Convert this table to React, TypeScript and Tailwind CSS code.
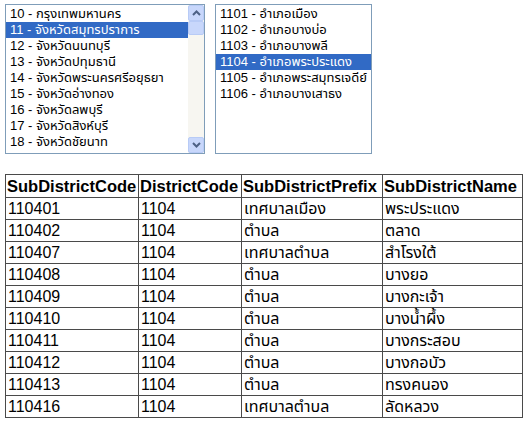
import React from 'react';

const provinces = [
  '10 - กรุงเทพมหานคร',
  '11 - จังหวัดสมุทรปราการ',
  '12 - จังหวัดนนทบุรี',
  '13 - จังหวัดปทุมธานี',
  '14 - จังหวัดพระนครศรีอยุธยา',
  '15 - จังหวัดอ่างทอง',
  '16 - จังหวัดลพบุรี',
  '17 - จังหวัดสิงห์บุรี',
  '18 - จังหวัดชัยนาท',
];

const districts = [
  '1101 - อำเภอเมือง',
  '1102 - อำเภอบางบ่อ',
  '1103 - อำเภอบางพลี',
  '1104 - อำเภอพระประแดง',
  '1105 - อำเภอพระสมุทรเจดีย์',
  '1106 - อำเภอบางเสาธง',
];

const rows: [string, string, string, string][] = [
  ['110401', '1104', 'เทศบาลเมือง', 'พระประแดง'],
  ['110402', '1104', 'ตำบล', 'ตลาด'],
  ['110407', '1104', 'เทศบาลตำบล', 'สำโรงใต้'],
  ['110408', '1104', 'ตำบล', 'บางยอ'],
  ['110409', '1104', 'ตำบล', 'บางกะเจ้า'],
  ['110410', '1104', 'ตำบล', 'บางน้ำผึ้ง'],
  ['110411', '1104', 'ตำบล', 'บางกระสอบ'],
  ['110412', '1104', 'ตำบล', 'บางกอบัว'],
  ['110413', '1104', 'ตำบล', 'ทรงคนอง'],
  ['110416', '1104', 'เทศบาลตำบล', 'ลัดหลวง'],
];

function ArrowBtn({ dir }: { dir: 'up' | 'down' }) {
  return (
    <div className="flex h-[16px] w-[16px] items-center justify-center rounded-[2px] border border-[#b8cbf6] bg-[#c8d7fb]">
      <svg width="9" height="6" viewBox="0 0 9 6">
        <path
          d={dir === 'up' ? 'M1 5 L4.5 1.5 L8 5' : 'M1 1 L4.5 4.5 L8 1'}
          fill="none"
          stroke="#4d6185"
          strokeWidth="2"
        />
      </svg>
    </div>
  );
}

function ListItem({ text, selected }: { text: string; selected?: boolean }) {
  return (
    <div
      className={
        'h-[16px] whitespace-nowrap pl-[4px] text-[13px] leading-[16px] ' +
        (selected ? 'bg-[#316ac5] text-white' : 'text-black')
      }
    >
      {text}
    </div>
  );
}

export default function App() {
  return (
    <div className="min-h-[422px] bg-white pl-[5px] pt-[4px] font-['Liberation_Sans',_'Noto_Sans_Thai',_sans-serif] text-black">
      <div className="flex items-start gap-[10px]">
        <div className="flex h-[150px] w-[200px] border border-[#7f9db9] bg-white">
          <div className="flex-1 overflow-hidden pt-[1px]">
            {provinces.map((p, i) => (
              <ListItem key={p} text={p} selected={i === 1} />
            ))}
          </div>
          <div className="flex w-[16px] flex-col bg-[#f7f6f1]">
            <ArrowBtn dir="up" />
            <div className="h-[14px] w-[16px] rounded-[2px] border border-[#b8cbf6] bg-[#c8d7fb]" />
            <div className="flex-1" />
            <ArrowBtn dir="down" />
          </div>
        </div>
        <div className="h-[150px] w-[157px] border border-[#7f9db9] bg-white pt-[1px]">
          {districts.map((d, i) => (
            <ListItem key={d} text={d} selected={i === 3} />
          ))}
        </div>
      </div>

      <table className="mt-[20px] w-[517px] table-fixed border-collapse border border-[#4a4a4a] text-[16px]">
        <colgroup>
          <col className="w-[133px]" />
          <col className="w-[103px]" />
          <col className="w-[141px]" />
          <col className="w-[140px]" />
        </colgroup>
        <thead>
          <tr className="h-[23px]">
            {['SubDistrictCode', 'DistrictCode', 'SubDistrictPrefix', 'SubDistrictName'].map((h) => (
              <th
                key={h}
                className="whitespace-nowrap border border-[#4a4a4a] px-[1px] py-0 text-left text-[16.5px] font-bold leading-[20px]"
              >
                {h}
              </th>
            ))}
          </tr>
        </thead>
        <tbody>
          {rows.map((r) => (
            <tr key={r[0]} className="h-[22px]">
              {r.map((c, j) => (
                <td key={j} className="whitespace-nowrap border border-[#4a4a4a] px-[2px] py-0 leading-[20px]">
                  {c}
                </td>
              ))}
            </tr>
          ))}
        </tbody>
      </table>
    </div>
  );
}
